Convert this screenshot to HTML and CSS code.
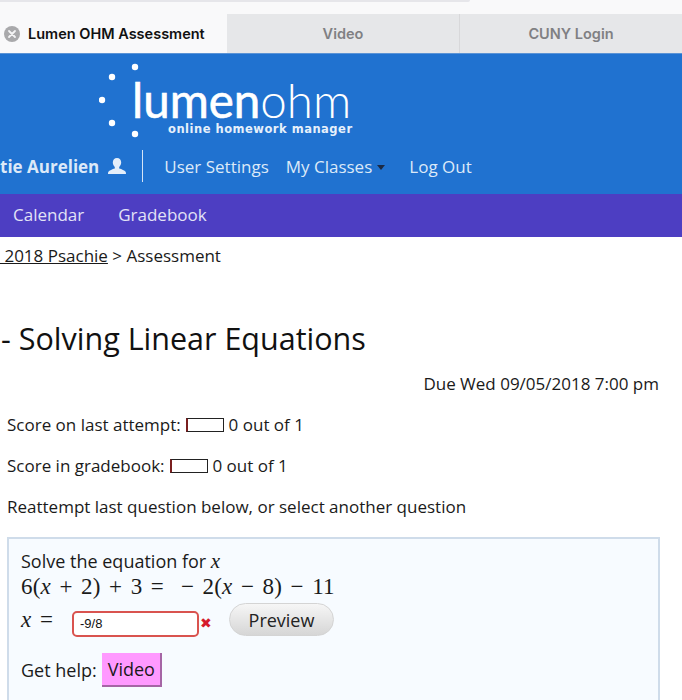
FILE: index.html
```html
<!DOCTYPE html>
<html lang="en">
<head>
    <meta charset="UTF-8">
    <meta name="viewport" content="width=device-width, initial-scale=1.0">
    <title>Lumen OHM Assessment</title>
    <link rel="stylesheet" href="styles.css">
</head>
<body>
    <div class="top-strip"><div class="url-edge"></div></div>

    <div class="tabs">
        <div class="tab tab-active">
            <svg class="tab-close" width="16" height="16" viewBox="0 0 16 16">
                <circle cx="8" cy="8" r="8" fill="#a9a9ab"/>
                <path d="M5 5l6 6M11 5l-6 6" stroke="#f4f4f5" stroke-width="1.8" stroke-linecap="round"/>
            </svg>
            <span>Lumen OHM Assessment</span>
        </div>
        <div class="tab tab-video">Video</div>
        <div class="tab tab-login">CUNY Login</div>
    </div>

    <header class="header">
        <div class="logo">
            <svg class="logo-dots" width="40" height="76" viewBox="0 0 40 76">
                <circle cx="36" cy="5" r="3.2" fill="#fff"/>
                <circle cx="13" cy="15" r="3.2" fill="#fff"/>
                <circle cx="3" cy="38" r="3.2" fill="#fff"/>
                <circle cx="13" cy="61" r="3.2" fill="#fff"/>
                <circle cx="36" cy="72" r="3.2" fill="#fff"/>
            </svg>
            <div class="logo-text">
                <div class="wordmark"><span class="wordmark-bold">lumen</span>ohm</div>
                <div class="tagline">online homework manager</div>
            </div>
        </div>
        <nav class="user-nav">
            <span class="user-name">tie Aurelien</span>
            <svg class="user-icon" width="18" height="17" viewBox="0 0 18 17">
                <path d="M9 0c2.600 0 4.200 2 4.200 4.600 0 1.900-.9 3.500-2 4.300v1.500c2.500.7 5.400 1.900 6.400 3.300.4.600.4 2.300.4 2.300H0s0-1.700.4-2.300c1-1.400 3.900-2.600 6.400-3.300V8.900c-1.100-.8-2-2.400-2-4.300C4.800 2 6.400 0 9 0z" fill="#e4eefa"/>
            </svg>
            <span class="nav-divider"></span>
            <a class="nav-link nav-settings">User Settings</a>
            <a class="nav-link nav-classes">My Classes</a>
            <span class="caret"></span>
            <a class="nav-link nav-logout">Log Out</a>
        </nav>
    </header>

    <nav class="subnav">
        <a class="subnav-link">Calendar</a>
        <a class="subnav-link">Gradebook</a>
    </nav>

    <main class="content">
        <div class="breadcrumb"><a class="crumb-link">&nbsp;2018 Psachie</a> &gt; Assessment</div>
        <h1 class="title">- Solving Linear Equations</h1>
        <div class="due">Due Wed 09/05/2018 7:00 pm</div>
        <p class="score">Score on last attempt: <span class="score-bar"></span> 0 out of 1</p>
        <p class="score">Score in gradebook: <span class="score-bar"></span> 0 out of 1</p>
        <p class="score">Reattempt last question below, or select another question</p>

        <section class="question">
            <div class="prompt">Solve the equation for <i class="math-var">x</i></div>
            <div class="equation">6(<i>x</i> + 2) + 3 = &nbsp;&minus; 2(<i>x</i> &minus; 8) &minus; 11</div>
            <div class="answer-row">
                <span class="answer-label"><i>x</i> =</span>
                <input class="answer-input" type="text" value="-9/8">
                <span class="wrong-mark">&#10006;</span>
                <button class="preview-btn" type="button">Preview</button>
            </div>
            <div class="help-row">
                <span>Get help:</span>
                <a class="help-video">Video</a>
            </div>
        </section>
    </main>
</body>
</html>
```

FILE: styles.css
```css
html, body {
    margin: 0;
    height: 700px;
    overflow: hidden;
}
body {
    font-family: "Open Sans", sans-serif;
    background-color: #fff;
    color: #1a1a1a;
}
.top-strip {
    height: 14px;
    background-color: #f9f9fa;
}
.url-edge {
    width: 470px;
    height: 2px;
    background-color: #e6e6ea;
    border-bottom-right-radius: 6px;
}
.tabs {
    display: flex;
    height: 39px;
    font-family: Inter, "Liberation Sans", sans-serif;
    font-size: 14.5px;
    font-weight: 600;
}
.tab {
    display: flex;
    align-items: center;
    justify-content: center;
    background-color: #e6e7e9;
    color: #808083;
}
.tab-active {
    width: 227px;
    box-sizing: border-box;
    justify-content: flex-start;
    gap: 8px;
    padding-left: 4px;
    background-color: #f9f9fa;
    color: #111;
}
.tab-video {
    width: 233px;
    border-right: 1px solid #d8d8da;
    box-sizing: border-box;
}
.tab-login {
    flex: 1;
}
.header {
    height: 141px;
    box-sizing: border-box;
    background-color: #2072d0;
    color: #fff;
    border-top: 1px solid #5a93d6;
}
.logo {
    display: flex;
    height: 90px;
    padding: 8px 0 0 99px;
    box-sizing: border-box;
}
.logo-dots {
    flex: none;
}
.logo-text {
    margin-left: -7px;
}
.wordmark {
    font-family: Lato, sans-serif;
    font-size: 47.5px;
    font-weight: 300;
    line-height: 46px;
    margin-top: 15px;
}
.wordmark-bold {
    font-weight: 400;
    -webkit-text-stroke: 0.6px #fff;
}
.tagline {
    font-family: "DejaVu Sans", sans-serif;
    font-size: 11.5px;
    font-weight: 700;
    letter-spacing: 0.5px;
    line-height: 14px;
    margin: -1px 0 0 36px;
    white-space: nowrap;
    color: #e6f0fb;
}
.user-nav {
    display: flex;
    align-items: center;
    height: 42px;
    margin-top: 1px;
    font-size: 17px;
    color: #dce9f8;
}
.user-name {
    font-weight: 700;
}
.user-icon {
    margin-left: 9px;
}
.nav-divider {
    width: 1px;
    height: 32px;
    margin: 0 21px 0 16px;
    background-color: #d5e4f6;
}
.nav-classes {
    margin-left: 17px;
}
.caret {
    width: 0;
    height: 0;
    margin: 3px 0 0 5px;
    border-left: 4.500px solid transparent;
    border-right: 4.500px solid transparent;
    border-top: 5px solid #1c2a44;
}
.nav-logout {
    margin-left: 24px;
}
.subnav {
    display: flex;
    align-items: center;
    gap: 34px;
    height: 41px;
    padding: 0 0 2px 13px;
    background-color: #4d3ec2;
    color: #e2e2f6;
    font-size: 17px;
}
.content {
    font-size: 17px;
}
.breadcrumb {
    padding-top: 7px;
    line-height: 24px;
}
.crumb-link {
    text-decoration: underline;
}
.title {
    margin: 0;
    padding: 48px 0 0 1px;
    font-size: 30.500px;
    font-weight: 400;
    line-height: 44px;
    color: #111;
}
.due {
    padding: 12px 23px 0 0;
    text-align: right;
    line-height: 24px;
}
.score {
    margin: 17px 0 0 7px;
    line-height: 24px;
}
.score-bar {
    display: inline-block;
    width: 35px;
    height: 12px;
    margin-left: 1px;
    border: 1px solid #222;
    border-left: 2px solid #7a1f1f;
    vertical-align: -1px;
}
.question {
    margin: 18px 22px 0 7px;
    padding: 10px 12px 0;
    height: 200px;
    border: 2px solid #cfdcea;
    background-color: #f7fbff;
    font-size: 18px;
}
.prompt {
    line-height: 24px;
}
.math-var, .equation i, .answer-label i {
    font-family: "Liberation Serif", serif;
    font-style: italic;
}
.math-var {
    font-size: 21px;
}
.equation, .answer-label {
    font-family: "Liberation Serif", serif;
    font-size: 23px;
    white-space: nowrap;
}
.equation {
    line-height: 28px;
    word-spacing: 2.500px;
    letter-spacing: 0.2px;
}
.answer-row {
    display: flex;
    align-items: center;
    height: 35px;
    margin-top: 1px;
}
.answer-label {
    width: 51px;
    word-spacing: 3px;
}
.answer-input {
    width: 127px;
    height: 26px;
    margin-top: 8px;
    box-sizing: border-box;
    padding: 0 6px;
    border: 2px solid #d9534f;
    border-radius: 5px;
    background-color: #fff;
    font-family: "Liberation Sans", sans-serif;
    font-size: 13px;
    color: #111;
}
.wrong-mark {
    width: 30px;
    padding: 5px 0 0 1px;
    box-sizing: border-box;
    font-size: 14px;
    color: #d51a2c;
}
.preview-btn {
    width: 105px;
    height: 33px;
    padding: 0;
    border: 1px solid #d4d4d4;
    border-radius: 17px;
    background: linear-gradient(#f6f6f6, #d6d6d6);
    font-family: "Open Sans", sans-serif;
    font-size: 18px;
    color: #222;
}
.help-row {
    display: flex;
    align-items: center;
    gap: 5px;
    margin-top: 16px;
}
.help-video {
    padding: 3px 5px 3px 6px;
    line-height: 26px;
    background-color: #ff99ff;
    border-right: 2px solid #a565a5;
    border-bottom: 2px solid #a565a5;
}
```
